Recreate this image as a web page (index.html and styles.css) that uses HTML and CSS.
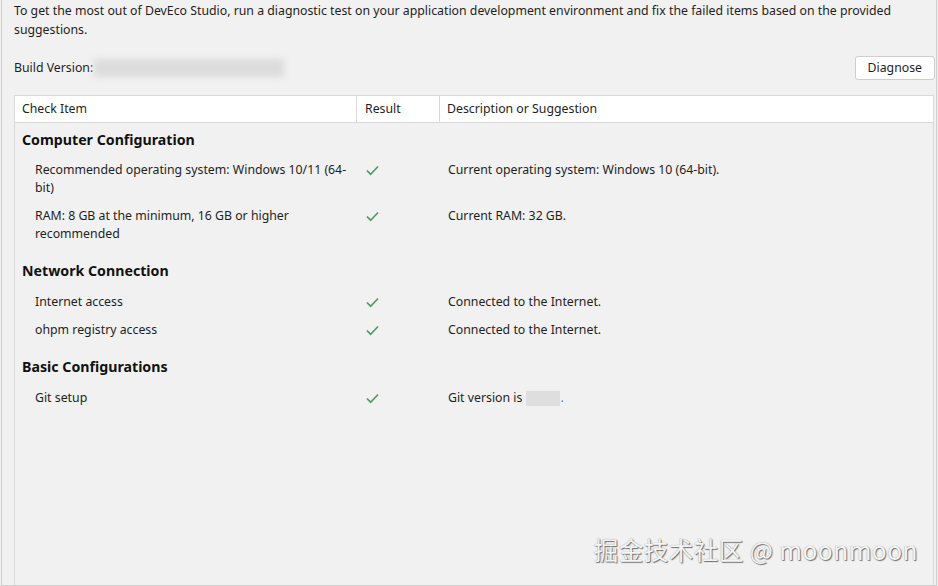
FILE: index.html
```html
<!DOCTYPE html>
<html>
<head>
<meta charset="utf-8">
<link rel="stylesheet" href="styles.css">
</head>
<body>
<div class="window">
  <p class="intro">To get the most out of DevEco Studio, run a diagnostic test on your application development environment and fix the failed items based on the provided suggestions.</p>
  <div class="build">
    <span class="build-label">Build Version:</span>
    <span class="blur-box"></span>
    <button class="btn">Diagnose</button>
  </div>
  <div class="table">
    <div class="thead">
      <div class="th">Check Item</div>
      <div class="th">Result</div>
      <div class="th">Description or Suggestion</div>
    </div>
    <div class="tbody">
      <div class="section first">Computer Configuration</div>
      <div class="row">
        <div class="c1">Recommended operating system: Windows 10/11 (64-bit)</div>
        <div class="c2"><svg class="check" viewBox="0 0 14 11"><path d="M1 5.5 L5 9.5 L13 1.2" /></svg></div>
        <div class="c3">Current operating system: Windows 10 (64-bit).</div>
      </div>
      <div class="row">
        <div class="c1">RAM: 8 GB at the minimum, 16 GB or higher recommended</div>
        <div class="c2"><svg class="check" viewBox="0 0 14 11"><path d="M1 5.5 L5 9.5 L13 1.2" /></svg></div>
        <div class="c3">Current RAM: 32 GB.</div>
      </div>
      <div class="section">Network Connection</div>
      <div class="row">
        <div class="c1">Internet access</div>
        <div class="c2"><svg class="check" viewBox="0 0 14 11"><path d="M1 5.5 L5 9.5 L13 1.2" /></svg></div>
        <div class="c3">Connected to the Internet.</div>
      </div>
      <div class="row">
        <div class="c1">ohpm registry access</div>
        <div class="c2"><svg class="check" viewBox="0 0 14 11"><path d="M1 5.5 L5 9.5 L13 1.2" /></svg></div>
        <div class="c3">Connected to the Internet.</div>
      </div>
      <div class="section">Basic Configurations</div>
      <div class="row">
        <div class="c1">Git setup</div>
        <div class="c2"><svg class="check" viewBox="0 0 14 11"><path d="M1 5.5 L5 9.5 L13 1.2" /></svg></div>
        <div class="c3">Git version is <span class="git-blur"></span><span class="dot">.</span></div>
      </div>
    </div>
  </div>
  <div class="watermark">掘金技术社区 @ moonmoon</div>
</div>
</body>
</html>
```
FILE: styles.css
```css
html, body {
  margin: 0;
  padding: 0;
  background: #f0f0f0;
}
body {
  font-family: "Noto Sans", "Noto Sans CJK SC", sans-serif;
  font-size: 12.3px;
  color: #1e1e1e;
}
.window {
  position: relative;
  margin: 0 1px;
  height: 586px;
  box-sizing: border-box;
  border-left: 1px solid #cfcfcf;
  border-right: 1px solid #cfcfcf;
  border-bottom: 1px solid #cfcfcf;
  padding: 0 1px 0 12px;
  display: flex;
  flex-direction: column;
  background: #f1f1f1;
}
.intro {
  margin: 0;
  line-height: 19px;
  padding-top: 1px;
  padding-right: 30px;
}
.build {
  display: flex;
  align-items: center;
  margin-top: 16px;
  height: 25px;
}
.build-label {
  line-height: 20px;
}
.blur-box {
  display: block;
  width: 190px;
  height: 18px;
  margin-left: 1px;
  background: #dcdcdc;
  filter: blur(3px);
}
.btn {
  margin-left: auto;
  height: 24px;
  padding: 0 12px;
  background: #ffffff;
  border: 1px solid #cdcdcd;
  border-radius: 3px;
  font-family: inherit;
  font-size: 12.3px;
  color: #1e1e1e;
}
.table {
  margin-top: 15px;
  margin-right: 1px;
  flex: 1;
  border: 1px solid #d9d9d9;
  border-bottom: none;
  display: flex;
  flex-direction: column;
}
.thead {
  display: grid;
  grid-template-columns: 342px 83px 1fr;
  background: #ffffff;
  border-bottom: 1px solid #d9d9d9;
  height: 26px;
}
.th {
  padding-left: 7px;
  line-height: 26px;
  border-right: 1px solid #d9d9d9;
}
.th:nth-child(2) {
  padding-left: 8px;
}
.th:last-child {
  border-right: none;
}
.section {
  font-weight: 700;
  font-size: 14.2px;
  line-height: 20px;
  padding: 13px 0 7px 7px;
  color: #111;
}
.section.first {
  padding-top: 7px;
  padding-bottom: 6px;
}
.row {
  display: grid;
  grid-template-columns: 342px 83px 1fr;
  line-height: 18px;
  padding: 5px 0 5px;
}
.c1 {
  padding-left: 20px;
  padding-right: 4px;
}
.c2 {
  padding-left: 9px;
  padding-top: 4px;
}
.c3 {
  padding-left: 8px;
  display: flex;
  align-items: center;
  height: 18px;
}
.check {
  width: 13px;
  height: 11px;
  display: block;
}
.check path {
  fill: none;
  stroke: #4f9a6a;
  stroke-width: 1.8;
}
.git-blur {
  display: inline-block;
  width: 34px;
  height: 15px;
  margin-left: 4px;
  background: #dedede;
}
.dot {
  color: #5b7fb5;
}
.watermark {
  position: absolute;
  right: 18px;
  bottom: 18px;
  font-family: "Noto Sans CJK SC", "Noto Sans", sans-serif;
  font-size: 24.5px;
  color: #f4f4f4;
  text-shadow: 1px 1px 1px #6f6f6f, 0 0 1px #8a8a8a;
  letter-spacing: 0.5px;
}
```
